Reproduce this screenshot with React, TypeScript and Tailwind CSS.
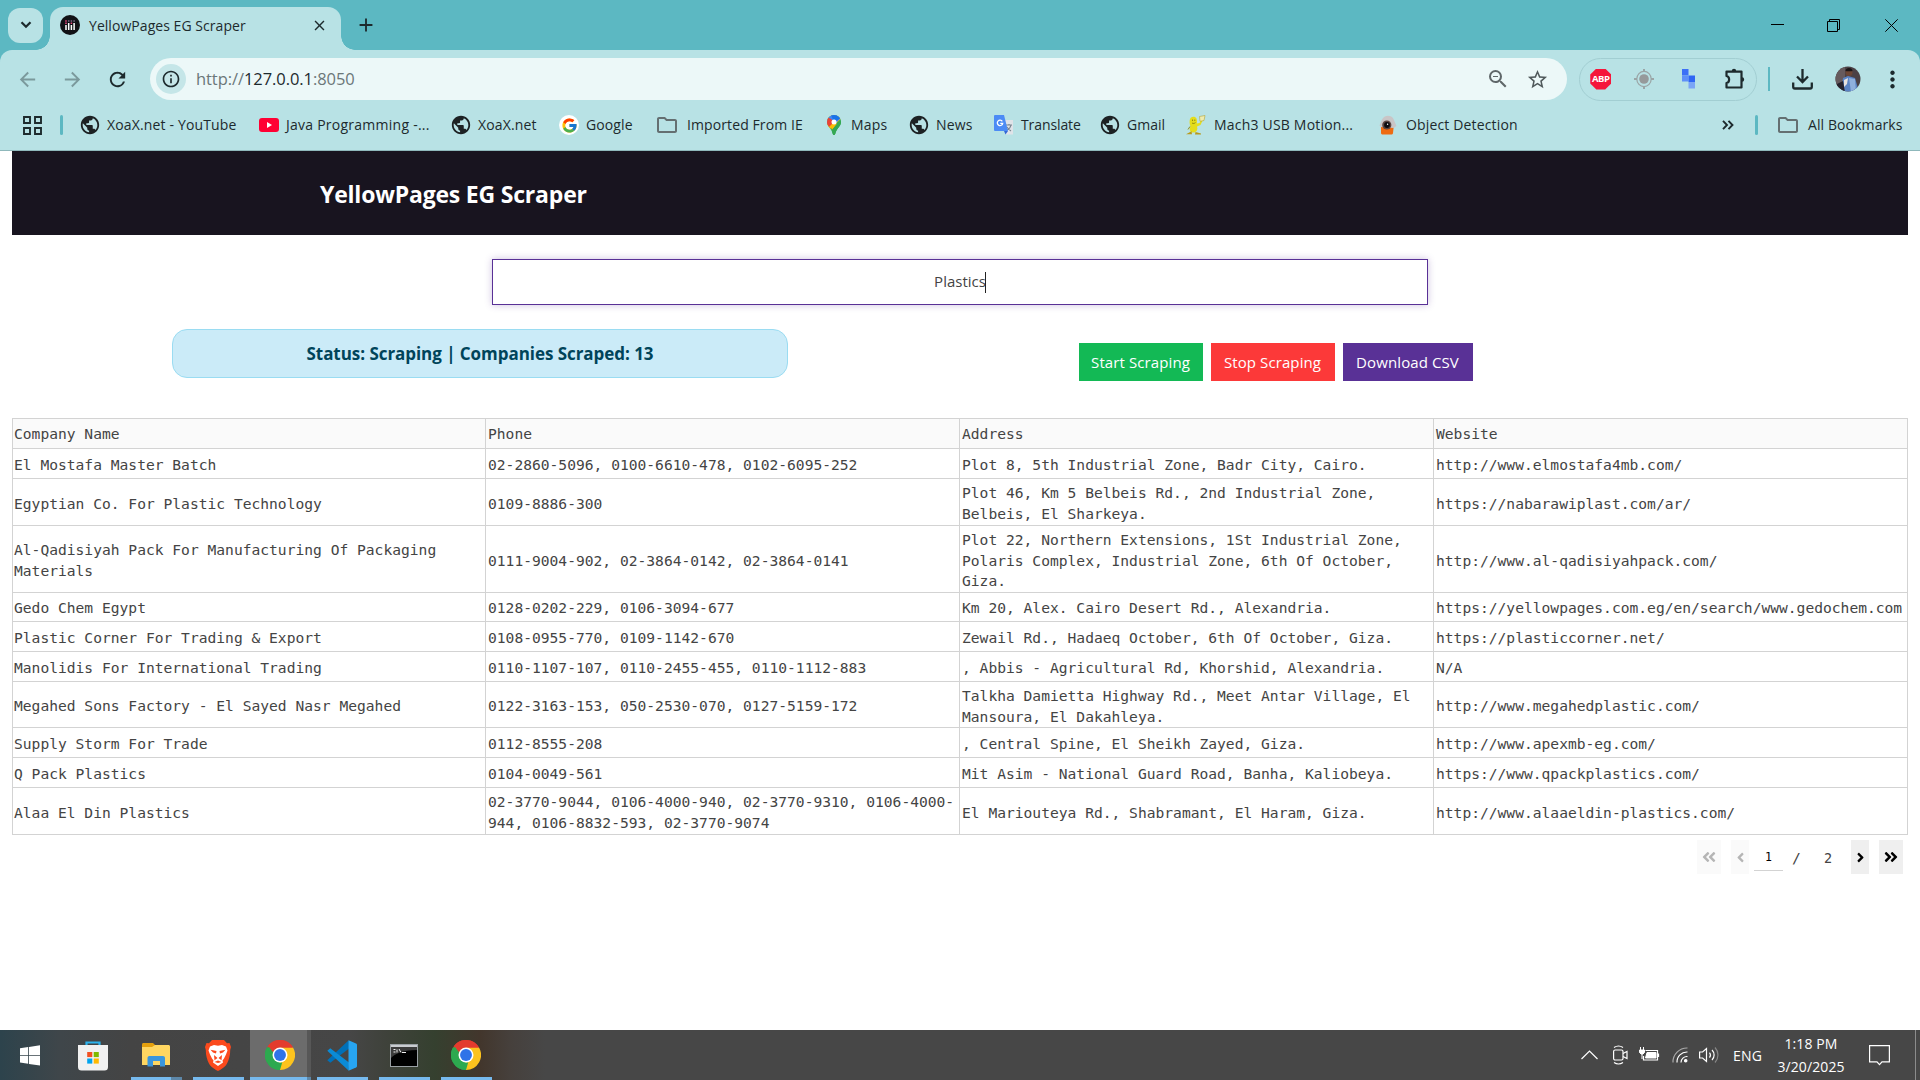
import React from "react";
import { MdArrowBack, MdArrowForward, MdRefresh, MdPublic, MdStarBorder, MdZoomOut, MdOutlineInfo, MdAdd, MdClose, MdMoreVert, MdOutlineFolder } from "react-icons/md";
import { FcGoogle } from "react-icons/fc";
import { FaAngleLeft, FaAngleRight, FaAngleDoubleLeft, FaAngleDoubleRight } from "react-icons/fa";

const YouTube = () => (
  <svg width="20" height="14" viewBox="0 0 20 14">
    <rect width="20" height="14" rx="3" fill="#ff0033" />
    <path d="M8 4v6l5-3z" fill="#fff" />
  </svg>
);

const GoogleBadge = () => (
  <span className="flex size-5 items-center justify-center rounded-full bg-white">
    <FcGoogle size={17} />
  </span>
);

const MapsPin = () => (
  <svg width="14" height="20" viewBox="0 0 14 20">
    <defs>
      <clipPath id="pin">
        <path d="M7 0a7 7 0 0 1 7 7c0 4.500-4.500 6-5.800 12-.3 1.300-2.100 1.300-2.400 0C4.500 13 0 11.500 0 7a7 7 0 0 1 7-7z" />
      </clipPath>
    </defs>
    <g clipPath="url(#pin)">
      <rect width="14" height="20" fill="#34a853" />
      <path d="M0 0h14v4L3 14 0 14z" fill="#fbbc04" />
      <path d="M0 0h14v3L8 9 0 9z" fill="#4285f4" />
      <path d="M4 0h10l0 3-7 4z" fill="#1a73e8" />
      <path d="M0 2l4 2 3 3-5 5-2-2z" fill="#ea4335" />
      <path d="M3.500 11L7 7l3 2-5 6z" fill="#fbbc04" />
      <path d="M5 15l9-11v16H5z" fill="#34a853" />
    </g>
    <circle cx="7" cy="7" r="2.500" fill="#fff" />
  </svg>
);

const TranslateIcon = () => (
  <svg width="20" height="20" viewBox="0 0 20 20">
    <path d="M8 5h11v14.500H12z" fill="#dfe3e8" />
    <path d="M12 10h6M15 9v1m2 0c-.5 2.500-2 4-4 5m0-3c1 2 2.500 3 4 4" stroke="#7b8590" strokeWidth="1.100" fill="none" />
    <path d="M1 0h9l4 16H1a1 1 0 0 1-1-1V1a1 1 0 0 1 1-1z" fill="#4c8bf5" />
    <path d="M10 16h4l-2.500 3.500z" fill="#3367d6" />
    <path d="M8.300 6.400A2.700 2.700 0 1 0 8.700 8.300H6.300" stroke="#fff" strokeWidth="1.300" fill="none" />
  </svg>
);

const MachIcon = () => (
  <svg width="20" height="20" viewBox="0 0 20 20">
    <path d="M4.500 3c2-2 5-1.500 6 .5.7 2 .6 3.500.3 5l2.700-.5 1.500-3 1.500.8-2 4.200-3.500 1.500c1 3 0 5-2.500 6H6c-2.500-1-3-3.500-1.500-6C3.500 9 3 5.500 4.500 3z" fill="#e4dd1c" />
    <path d="M13.500 1.500L19 .5l-1 5-4 .8z" fill="#efecb0" stroke="#b3a436" strokeWidth=".6" />
    <path d="M0 19.300l5.500-3 .5 3zM9.500 17l5.500 1.500v1H9z" fill="#b79a1c" />
    <path d="M6.500 4.500v1.500M8.800 4.500v1.500M6 8c1.200.8 2.600.5 3.500-.4M4 11.500l-2 3" stroke="#8a8412" strokeWidth=".9" fill="none" />
  </svg>
);

const CameraIcon = () => (
  <svg width="20" height="20" viewBox="0 0 20 20">
    <path d="M3 9h13l-1 9c0 1-1 1.500-2 1.500H5c-1 0-2-.5-2-1.500z" fill="#ee6b12" />
    <path d="M1.500 10.500L4 4.500C6-.5 13.500-.5 15.500 4l3 7-3 2L3 12z" fill="#c9c5c6" />
    <circle cx="8.800" cy="10" r="4.600" fill="#5b4440" />
    <circle cx="9" cy="10" r="2.900" fill="#0c0c10" />
    <circle cx="9.600" cy="9.300" r=".7" fill="#fff" />
  </svg>
);

const Globe = () => <MdPublic size={22} className="text-[#1d2224]" />;
const Folder = () => <MdOutlineFolder size={24} className="text-[#646f71]" />;

const bookmarks = [
  { t: "XoaX.net - YouTube", i: <Globe />, w: "w-[179px] gap-[7px] tracking-[0.15px]" },
  { t: "Java Programming -...", i: <YouTube />, w: "w-[192px] gap-[7px] tracking-[0.25px]" },
  { t: "XoaX.net", i: <Globe />, w: "w-[108px] gap-[7px] tracking-[0.15px]" },
  { t: "Google", i: <GoogleBadge />, w: "w-[98px] gap-[7px] tracking-[0.1px]" },
  { t: "Imported From IE", i: <Folder />, w: "w-[167px] gap-[10px] tracking-[0.1px]" },
  { t: "Maps", i: <MapsPin />, w: "w-[85px] gap-[7px] tracking-[0.2px]" },
  { t: "News", i: <Globe />, w: "w-[85px] gap-[7px] tracking-[0.2px]" },
  { t: "Translate", i: <TranslateIcon />, w: "w-[106px] gap-[7px] tracking-[-0.1px]" },
  { t: "Gmail", i: <Globe />, w: "w-[86px] gap-[7px]" },
  { t: "Mach3 USB Motion...", i: <MachIcon />, w: "w-[192px] gap-2 tracking-[0.2px]" },
  { t: "Object Detection", i: <CameraIcon />, w: "w-[150px] gap-2 tracking-[0.15px]" },
];

function TabStrip() {
  return (
    <div className="flex h-[50px] items-center">
      <button className="ml-2 flex size-[35px] items-center justify-center rounded-[12px] bg-[#b8e2e5] text-[#1d2a2d]">
        <svg width="12" height="8" viewBox="0 0 12 8" fill="none" stroke="currentColor" strokeWidth="2.200">
          <path d="M1.500 1.200L6 5.800l4.500-4.600" />
        </svg>
      </button>
      <div className="relative mt-[7px] ml-[7px] flex h-[43px] w-[291px] items-center rounded-t-[13px] bg-[#b8e2e5] pb-[7px] pl-[10px]">
        <span className="absolute bottom-0 -left-[14px] size-[14px] bg-[radial-gradient(circle_at_0_0,transparent_13.5px,#b8e2e5_14px)]" />
        <span className="absolute -right-[14px] bottom-0 size-[14px] bg-[radial-gradient(circle_at_100%_0,transparent_13.5px,#b8e2e5_14px)]" />
        <svg width="20" height="20" viewBox="0 0 20 20">
          <circle cx="10" cy="10" r="10" fill="#111216" />
          <path d="M6 10v5M8.700 8v7M11.400 10v5M14.100 8v7" stroke="#fff" strokeWidth="1.500" />
          <path d="M6 5.200v1.500M6 7.500v1.500M11.400 7.500v1.500" stroke="#e8467c" strokeWidth="1.500" />
          <path d="M8.700 5.200v1.500M11.400 5.200v1.500M14.100 5.200v1.500" stroke="#7b6a8a" strokeWidth="1.500" />
        </svg>
        <span className="ml-[9px] w-[222px] text-[14px] tracking-[0.05px]">YellowPages EG Scraper</span>
        <MdClose size={17} className="text-[#1d2a2d]" />
      </div>
      <MdAdd size={22} className="ml-[14px] text-[#1d2a2d]" />
      <div className="ml-auto flex pr-[22px] text-black">
        <span className="mr-[43px] flex h-[13px] w-[13px] items-start pt-[5px]">
          <span className="h-px w-full bg-black" />
        </span>
        <svg className="mr-[45px]" width="13" height="13" viewBox="0 0 13 13" fill="none" stroke="currentColor">
          <path d="M.5 2.500h10v10H.5zM2.500 2.500v-2h10v10h-2" />
        </svg>
        <svg width="13" height="13" viewBox="0 0 13 13" fill="none" stroke="currentColor" strokeWidth="1">
          <path d="M.3.3l12.400 12.400M12.700.3L.3 12.700" />
        </svg>
      </div>
    </div>
  );
}

function Toolbar() {
  return (
    <div className="flex h-[58px] items-center text-[#1d2a2d]">
      <div className="ml-[5px] flex w-[45px] justify-center text-[#7b999c]"><MdArrowBack size={23} /></div>
      <div className="flex w-[45px] justify-center text-[#7b999c]"><MdArrowForward size={23} /></div>
      <div className="flex w-[45px] justify-center"><MdRefresh size={23} /></div>
      <div className="ml-[10px] flex h-[42px] w-[1417px] items-center rounded-full bg-[#ecf8f8] pl-[6px]">
        <span className="flex size-[30px] items-center justify-center rounded-full bg-[#c5e6e8]">
          <MdOutlineInfo size={20} />
        </span>
        <span className="ml-[10px] grow pt-px text-[16.5px] tracking-[-0.07px] text-[#6b7778]">
          http://<span className="text-[#1d2a2d]">127.0.0.1</span>:8050
        </span>
        <MdZoomOut size={24} className="mr-[16px] text-[#5f6769]" />
        <MdStarBorder size={23} className="mr-[18px] text-[#50595b]" />
      </div>
      <div className="ml-[12px] flex h-[43px] w-[178px] items-center rounded-full border border-[#a2ced2]">
        <span className="flex w-[42px] justify-center">
          <span className="flex size-[21px] items-center justify-center bg-[#f5163b] text-[9.5px] font-bold tracking-[-0.4px] text-white [clip-path:polygon(29%_0,71%_0,100%_29%,100%_71%,71%_100%,29%_100%,0_71%,0_29%)]">ABP</span>
        </span>
        <span className="flex w-[46px] justify-center">
          <svg width="20" height="24" viewBox="0 0 20 24" fill="none" stroke="#9aa5a6">
            <ellipse cx="10" cy="12" rx="7.200" ry="7.600" strokeWidth="1.200" />
            <circle cx="10" cy="12" r="4.800" fill="#969a9b" stroke="none" />
            <path d="M10 2v3M10 19v3M0 12h3M17 12h3" strokeWidth="2" />
          </svg>
        </span>
        <span className="flex w-[45px] justify-center">
          <svg width="14" height="20" viewBox="0 0 14 20">
            <path d="M0 0h6.500v6.500H0z" fill="#3c70f6" />
            <path d="M0 6.500h6.500v6H0z" fill="#5f90f8" />
            <path d="M6.500 6.500H13v6.500H6.500z" fill="#2f66f4" />
            <path d="M6.500 13H13v6.500H6.500z" fill="#7ba5f6" />
          </svg>
        </span>
        <span className="flex w-[45px] justify-center pl-[3px]">
          <svg width="22" height="22" viewBox="0 0 22 22" fill="none" stroke="currentColor" strokeWidth="2.200" strokeLinejoin="round">
            <path d="M2.500 3.600H17.500V19.500H2.500V15c3.500-.6 3.500-6.400 0-7z" />
            <path d="M7.800 3a2.200 2.200 0 0 1 4.400 0zM18 9.300a2.200 2.200 0 0 1 0 4.400z" fill="currentColor" stroke="none" />
          </svg>
        </span>
      </div>
      <span className="ml-[11px] h-6 w-[2px] bg-[#5cb8c2]" />
      <svg className="ml-[22px]" width="21" height="21" viewBox="0 0 21 21" fill="none" stroke="currentColor" strokeWidth="2.300">
        <path d="M10.500 0v13M5 7.500l5.500 5.500L16 7.500M1.200 13.500v4.300c0 1 .7 1.700 1.700 1.700h15.200c1 0 1.700-.7 1.700-1.700v-4.300" />
      </svg>
      <svg className="ml-[22px]" width="26" height="26" viewBox="0 0 26 26">
        <defs><clipPath id="ava"><circle cx="13" cy="13" r="12.500" /></clipPath></defs>
        <g clipPath="url(#ava)">
          <rect width="26" height="26" fill="#4b4145" />
          <path d="M0 0h10v26H0z" fill="#665a5d" />
          <path d="M8 12l5-2 7 2 4 14H6z" fill="#5a83c4" />
          <path d="M14 12l6 1 1 13h-5z" fill="#8fb0dc" />
          <circle cx="14" cy="6.500" r="3.500" fill="#6d4635" />
          <path d="M10.500 5c0-4 7-4 7 0l-1 .3h-5z" fill="#1b1517" />
          <path d="M9 14l4-2-1 6-3 3z" fill="#e8e2df" />
          <path d="M2 18l6-3 2 11H2z" fill="#25222d" />
        </g>
      </svg>
      <MdMoreVert size={27} className="ml-[18px]" />
    </div>
  );
}

function BookmarksBar() {
  return (
    <div className="flex h-[42px] items-center pb-[8px] text-[14px] text-[#1d2a2d]">
      <svg className="ml-[23px]" width="19" height="19" viewBox="0 0 19 19" fill="none" stroke="currentColor" strokeWidth="1.900">
        <path d="M1 1h6v6H1zM12 1h6v6h-6zM1 12h6v6H1zM12 12h6v6h-6z" />
      </svg>
      <span className="mr-[17px] ml-[18px] h-5 w-[3px] rounded-full bg-[#5cb8c2]" />
      {bookmarks.map((b, k) => (
        <div key={k} className={"flex shrink-0 items-center whitespace-nowrap " + b.w}>
          <span className="flex w-5 shrink-0 items-center justify-center">
            <span className="flex shrink-0">{b.i}</span>
          </span>
          <span className="pb-[2px]">{b.t}</span>
        </div>
      ))}
      <svg className="mr-[21px] ml-auto" width="12" height="10" viewBox="0 0 12 10" fill="none" stroke="currentColor" strokeWidth="1.900">
        <path d="M1 .8L5 5 1 9.200M6.500.8l4 4.200-4 4.200" />
      </svg>
      <span className="mr-[18px] h-5 w-[3px] rounded-full bg-[#5cb8c2]" />
      <Folder />
      <span className="ml-[8px] w-[112px] pb-[2px] tracking-[0.1px]">All Bookmarks</span>
    </div>
  );
}

const rows = [
  { h: "h-[30px]", c: ["El Mostafa Master Batch", "02-2860-5096, 0100-6610-478, 0102-6095-252", "Plot 8, 5th Industrial Zone, Badr City, Cairo.", "http://www.elmostafa4mb.com/"] },
  { h: "h-[47px]", c: ["Egyptian Co. For Plastic Technology", "0109-8886-300", "Plot 46, Km 5 Belbeis Rd., 2nd Industrial Zone, Belbeis, El Sharkeya.", "https://nabarawiplast.com/ar/"] },
  { h: "h-[66px]", c: ["Al-Qadisiyah Pack For Manufacturing Of Packaging Materials", "0111-9004-902, 02-3864-0142, 02-3864-0141", "Plot 22, Northern Extensions, 1St Industrial Zone, Polaris Complex, Industrial Zone, 6th Of October, Giza.", "http://www.al-qadisiyahpack.com/"] },
  { h: "h-[30px]", c: ["Gedo Chem Egypt", "0128-0202-229, 0106-3094-677", "Km 20, Alex. Cairo Desert Rd., Alexandria.", "https://yellowpages.com.eg/en/search/www.gedochem.com"] },
  { h: "h-[30px]", c: ["Plastic Corner For Trading & Export", "0108-0955-770, 0109-1142-670", "Zewail Rd., Hadaeq October, 6th Of October, Giza.", "https://plasticcorner.net/"] },
  { h: "h-[30px]", c: ["Manolidis For International Trading", "0110-1107-107, 0110-2455-455, 0110-1112-883", ", Abbis - Agricultural Rd, Khorshid, Alexandria.", "N/A"] },
  { h: "h-[46px]", c: ["Megahed Sons Factory - El Sayed Nasr Megahed", "0122-3163-153, 050-2530-070, 0127-5159-172", "Talkha Damietta Highway Rd., Meet Antar Village, El Mansoura, El Dakahleya.", "http://www.megahedplastic.com/"] },
  { h: "h-[30px]", c: ["Supply Storm For Trade", "0112-8555-208", ", Central Spine, El Sheikh Zayed, Giza.", "http://www.apexmb-eg.com/"] },
  { h: "h-[30px]", c: ["Q Pack Plastics", "0104-0049-561", "Mit Asim - National Guard Road, Banha, Kaliobeya.", "https://www.qpackplastics.com/"] },
  { h: "h-[47px]", c: ["Alaa El Din Plastics", "02-3770-9044, 0106-4000-940, 02-3770-9310, 0106-4000-944, 0106-8832-593, 02-3770-9074", "El Mariouteya Rd., Shabramant, El Haram, Giza.", "http://www.alaaeldin-plastics.com/"] },
];

function DataTable() {
  return (
    <div className="mx-3 mt-[37px] border-t border-l border-[#d3d3d3] font-['DejaVu_Sans_Mono',monospace] text-[14.62px] leading-[20.6px] text-[#444]">
      <div className="grid h-[30px] grid-cols-[473px_474px_474px_474px] bg-[#fafafa]">
        {["Company Name", "Phone", "Address", "Website"].map((h) => (
          <div key={h} className="flex items-center border-r border-b border-[#d3d3d3] pt-[2px] pl-[2px] first:pl-px">{h}</div>
        ))}
      </div>
      {rows.map((r) => (
        <div key={r.c[0]} className={"grid grid-cols-[473px_474px_474px_474px] " + r.h}>
          {r.c.map((v, k) => (
            <div key={k} className="flex items-center border-r border-b border-[#d3d3d3] pt-[4px] pl-[2px] first:pl-px">{v}</div>
          ))}
        </div>
      ))}
    </div>
  );
}

function Pager() {
  return (
    <div className="mt-[5px] flex h-[34px] items-stretch justify-end pr-[17px] text-[14px] text-[#444]">
      <span className="flex w-6 items-center justify-center bg-[#fafafa] text-[#b5b5b5]"><FaAngleDoubleLeft size={16} /></span>
      <span className="ml-[10px] flex w-[18px] items-center justify-center bg-[#fafafa] text-[#b5b5b5]"><FaAngleLeft size={15} /></span>
      <span className="mb-[3px] ml-[5px] flex w-[29px] items-center justify-center border-b border-[#d3d3d3] pt-[6px] font-['DejaVu_Sans_Mono',monospace] text-[11.5px] text-black">1</span>
      <span className="ml-[9px] flex w-[9px] items-center justify-center pt-[2px] font-['DejaVu_Sans_Mono',monospace] text-[14.62px]">/</span>
      <span className="ml-[23px] flex w-[8px] items-center justify-center pt-[2px] font-['DejaVu_Sans_Mono',monospace] text-[13.5px]">2</span>
      <span className="ml-[19px] flex w-[18px] items-center justify-center bg-[#efefef] text-black"><FaAngleRight size={15} /></span>
      <span className="ml-[10px] flex w-6 items-center justify-center bg-[#efefef] text-black"><FaAngleDoubleRight size={16} /></span>
    </div>
  );
}

function Page() {
  return (
    <main className="h-[879px] overflow-hidden bg-white">
      <header className="mx-3 flex h-[84px] items-center bg-[#18141f] pl-[308px] text-[23px] font-bold tracking-[-0.2px] text-white">
        <span className="pt-[3px]">YellowPages EG Scraper</span>
      </header>
      <div className="mx-auto mt-6 flex h-[46px] w-[936px] items-center justify-center border border-[#593196] text-[15px] text-[#444] shadow-[0_0_7px_rgba(89,49,150,0.3)]">
        <span className="-mt-px">Plastics</span><span className="-ml-px h-[21px] w-px bg-[#222]" />
      </div>
      <div className="mt-6 flex h-[52px]">
        <div className="ml-[172px] flex h-[49px] w-[616px] items-center justify-center rounded-[15px] border border-[#9adcf2] bg-[#cbebf8] text-[17px] font-bold tracking-[-0.05px] text-[#00445a]">
          Status: Scraping | Companies Scraped: 13
        </div>
        <div className="mt-[14px] ml-[291px] flex h-[38px] gap-2 text-[15px] tracking-[0.1px] text-white">
          <button className="w-[124px] bg-[#13b955] pr-px">Start Scraping</button>
          <button className="w-[124px] bg-[#fc3939] pr-px">Stop Scraping</button>
          <button className="w-[130px] bg-[#593196] pr-px">Download CSV</button>
        </div>
      </div>
      <DataTable />
      <Pager />
    </main>
  );
}

const Chrome = () => (
  <svg width="30" height="30" viewBox="0 0 48 48">
    <path d="M24 24L3.200 12A24 24 0 0 1 44.800 12z" fill="#e33b2e" />
    <path d="M24 24L44.800 12A24 24 0 0 1 24 48z" fill="#fcc31e" />
    <path d="M24 24v24A24 24 0 0 1 3.200 12z" fill="#2da94f" />
    <path d="M24 12h20.800L40 20l-6-2z" fill="#fcc31e" />
    <path d="M3.200 12l10.400 18 4-8-5-12z" fill="#2da94f" />
    <path d="M24 48l10.400-18-9 3-6 8z" fill="#fcc31e" />
    <path d="M5 9.300A24 24 0 0 1 44.800 12H24a12 12 0 0 0-11 8z" fill="#e33b2e" />
    <path d="M3.200 12l10.400 18a12 12 0 0 0 14 5.500L24 48A24 24 0 0 1 3.200 12z" fill="#2da94f" />
    <circle cx="24" cy="24" r="12" fill="#fff" />
    <circle cx="24" cy="24" r="9.500" fill="#2f73e8" />
  </svg>
);

const WindowsLogo = () => (
  <svg width="20" height="21" viewBox="0 0 20 21" fill="#fff">
    <path d="M0 3.200L8.200 2v8H0zM9 1.900L20 .2V10H9zM0 10.800h8.200v8L0 17.600zM9 10.800h11v9.800L9 19z" />
  </svg>
);

const Store = () => (
  <svg width="30" height="31" viewBox="0 0 30 31">
    <path d="M8.500 6V2.500h13V6" fill="none" stroke="#2db4ee" strokeWidth="2.200" />
    <path d="M0 5h30v22a3.500 3.500 0 0 1-3.500 3.500h-23A3.500 3.500 0 0 1 0 27z" fill="#f1f1f1" />
    <path d="M9.200 12h5.100v5.100H9.200z" fill="#f25022" />
    <path d="M15.700 12h5.100v5.100h-5.100z" fill="#7fba00" />
    <path d="M9.200 18.500h5.100v5.100H9.200z" fill="#00a4ef" />
    <path d="M15.700 18.500h5.100v5.100h-5.100z" fill="#ffb900" />
  </svg>
);

const Explorer = () => (
  <svg width="28" height="24" viewBox="0 0 28 24">
    <path d="M0 1.500C0 .7.600 0 1.500 0h9.500l2.500 2.500V6H0z" fill="#e5a00d" />
    <path d="M0 4h10l3-2h13.500c.8 0 1.500.7 1.500 1.500V22H0z" fill="#ffd661" />
    <path d="M5.500 23.500V15c0-1.200.8-2 2-2h13.500c1.200 0 2 .8 2 2v8.500h-5V18h-7v5.500z" fill="#3a96dd" />
  </svg>
);

const Brave = () => (
  <svg width="26" height="31" viewBox="0 0 26 31">
    <path d="M7 0h12l3 3.200 2.500-.3L26 7l-.8 3L25 14c-.7 5-2.500 9-4 11.300-2 2.300-5.500 4.500-8 5.700-2.500-1.200-6-3.400-8-5.700C3.500 23 1.700 19 1 14l-.2-4L0 7l1.500-4.100L4 3.200z" fill="#fb4a1d" />
    <path d="M9 5l4 .8L17 5l4 1.500 1.500 4-1.500 4-2 4-1.500 2 .5 2-5 3.500-5-3.500.5-2-1.500-2-2-4-1.500-4 1.500-4z" fill="#fff" />
    <path d="M5.500 9.800l6 1.200-.5 2.600-3-1zM20.500 9.800l-6 1.200.5 2.600 3-1zM9 15l3.500 3-3 2.200zM17 15l-3.500 3 3 2.200zM9.500 22l3.500-1.600 3.500 1.600-3.500 1z" fill="#fb4a1d" />
  </svg>
);

const VsCode = () => (
  <svg width="30" height="31" viewBox="0 0 30 31">
    <path d="M.3 20.300L21.500.5 22 8.500 3.300 22.800z" fill="#0070b8" />
    <path d="M.3 10.700l3-2.500L22 22.500 21.500 30.500z" fill="#0b8bd6" />
    <path d="M21.500.3L29 3.400c.6.300 1 .8 1 1.500v21.200c0 .7-.4 1.200-1 1.500l-7.500 3.100z" fill="#27a5f2" />
  </svg>
);

const Cmd = () => (
  <svg width="28" height="23" viewBox="0 0 28 23">
    <rect x=".5" y=".5" width="27" height="22" fill="#000" stroke="#9aa0a4" />
    <path d="M1 1h26v2H1z" fill="#c9ccd0" />
    <path d="M1 3h26v3C12 6 5 10 1 14z" fill="#3b3b3b" />
    <path d="M3.500 5.500h2M3.500 8h2M7 5.500v3M9 5l2 3.500M12 8.500h4" stroke="#eee" fill="none" />
  </svg>
);

const Underline = ({ w }: { w: string }) => <span className={"h-[3px] bg-[#76b9ed] " + w} />;

function Task({ children, bar, cls }: { children: React.ReactNode; bar?: React.ReactNode; cls: string }) {
  return (
    <div className={"flex h-full shrink-0 flex-col items-center " + cls}>
      <div className="flex grow items-center pt-[3px]">{children}</div>
      <div className="flex h-[3px] w-full justify-center">{bar}</div>
    </div>
  );
}

function Taskbar() {
  return (
    <footer className="flex h-[50px] items-center bg-[linear-gradient(90deg,#2d434c_0,#3f464a_60px,#444_130px,#464646_350px,#3f423b_385px,#35402f_435px,#42362c_480px,#46403c_510px,#474747_545px)] text-white">
      <Task cls="w-[60px]"><WindowsLogo /></Task>
      <Task cls="w-[66px]"><Store /></Task>
      <Task cls="w-[60px]" bar={<><Underline w="w-10" /><span className="h-[3px] w-[11px] bg-[#5d87a8]" /></>}><Explorer /></Task>
      <Task cls="w-[64px]" bar={<Underline w="w-[51px]" />}><Brave /></Task>
      <Task cls="w-[57px] bg-[#6c6c6c] [&>div:first-child]:pl-[3px]" bar={<Underline w="w-full" />}><Chrome /></Task>
      <Task cls="w-1 bg-[#575757]" bar={<span className="w-full bg-[#5d87a8]" />}>{null}</Task>
      <Task cls="w-[62px]" bar={<Underline w="w-[51px]" />}><VsCode /></Task>
      <Task cls="w-[62px]" bar={<Underline w="w-[51px]" />}><Cmd /></Task>
      <Task cls="w-[62px]" bar={<Underline w="w-[51px]" />}><Chrome /></Task>
      <div className="ml-auto flex h-full items-center">
        <svg width="17" height="10" viewBox="0 0 17 10" fill="none" stroke="#fff" strokeWidth="1.200"><path d="M.5 9l8-8 8 8" /></svg>
        <svg className="ml-[14px]" width="16" height="20" viewBox="0 0 16 20" fill="none" stroke="#fff" strokeWidth="1.200">
          <path d="M2 2.500c3-2 6-2 9 0M2 17.500c3 2 6 2 9 0M11 8.500l4-2v7l-4-2" />
          <rect x="1.600" y="5" width="9.400" height="10" rx="1.500" />
        </svg>
        <svg className="ml-[11px]" width="21" height="16" viewBox="0 0 21 16" fill="none" stroke="#fff">
          <path d="M6.500 3.500h12v9.500h-14V9M19.500 6.500v3.500" strokeWidth="1.200" />
          <path d="M8 5.500h9v5.500H6.500z" fill="#fff" />
          <path d="M1.500 0v3M4.500 0v3M3 7v5" />
          <path d="M.5 3h5v2.500L4 7H2L.5 5.500z" fill="#fff" />
        </svg>
        <svg className="ml-[12px]" width="16" height="16" viewBox="0 0 16 16" fill="none" stroke="#fff" strokeWidth="1.200">
          <path d="M9 15.500a6 6 0 0 1 6.500-6M5 15.500A10 10 0 0 1 15.500 5" />
          <path d="M1 15.500A14 14 0 0 1 15.500 1" stroke="#aaa" />
          <circle cx="13.700" cy="13.700" r="1.200" fill="#fff" />
        </svg>
        <svg className="ml-[11px]" width="21" height="18" viewBox="0 0 21 18" fill="none" stroke="#fff" strokeWidth="1.200">
          <path d="M.6 6h3L7.500 2.500v13L3.600 12h-3zM10.500 6.500a4 4 0 0 1 0 5M13 4a7 7 0 0 1 0 10" />
          <path d="M16 1.500a11 11 0 0 1 0 15" stroke="#888" />
        </svg>
        <span className="ml-[13px] w-[28px] text-[14px] tracking-[0.2px]">ENG</span>
        <div className="ml-[16px] flex w-[68px] flex-col items-center text-[14px] leading-[23px] tracking-[0.1px] whitespace-nowrap">
          <span>1:18 PM</span>
          <span>3/20/2025</span>
        </div>
        <svg className="mr-[25px] ml-[24px]" width="21" height="21" viewBox="0 0 21 21" fill="none" stroke="#fff" strokeWidth="1.200">
          <path d="M.6.6h19.800v16.300h-7.400l-2.500 2.800L8 16.900H.6z" />
        </svg>
        <span className="h-full w-px bg-[#8c8c8c]" />
        <span className="w-[4px]" />
      </div>
    </footer>
  );
}

export default function App() {
  return (
    <div className="flex h-[1080px] w-[1920px] flex-col overflow-hidden bg-white font-['Open_Sans','Noto_Sans',sans-serif] text-[#1d2a2d]">
      <div className="h-[151px] bg-[#5cb8c2]">
        <TabStrip />
        <div className="rounded-t-[12px] bg-[#b8e2e5]">
          <Toolbar />
          <BookmarksBar />
          <div className="h-px bg-[#8fb8bb]" />
        </div>
      </div>
      <Page />
      <Taskbar />
    </div>
  );
}
